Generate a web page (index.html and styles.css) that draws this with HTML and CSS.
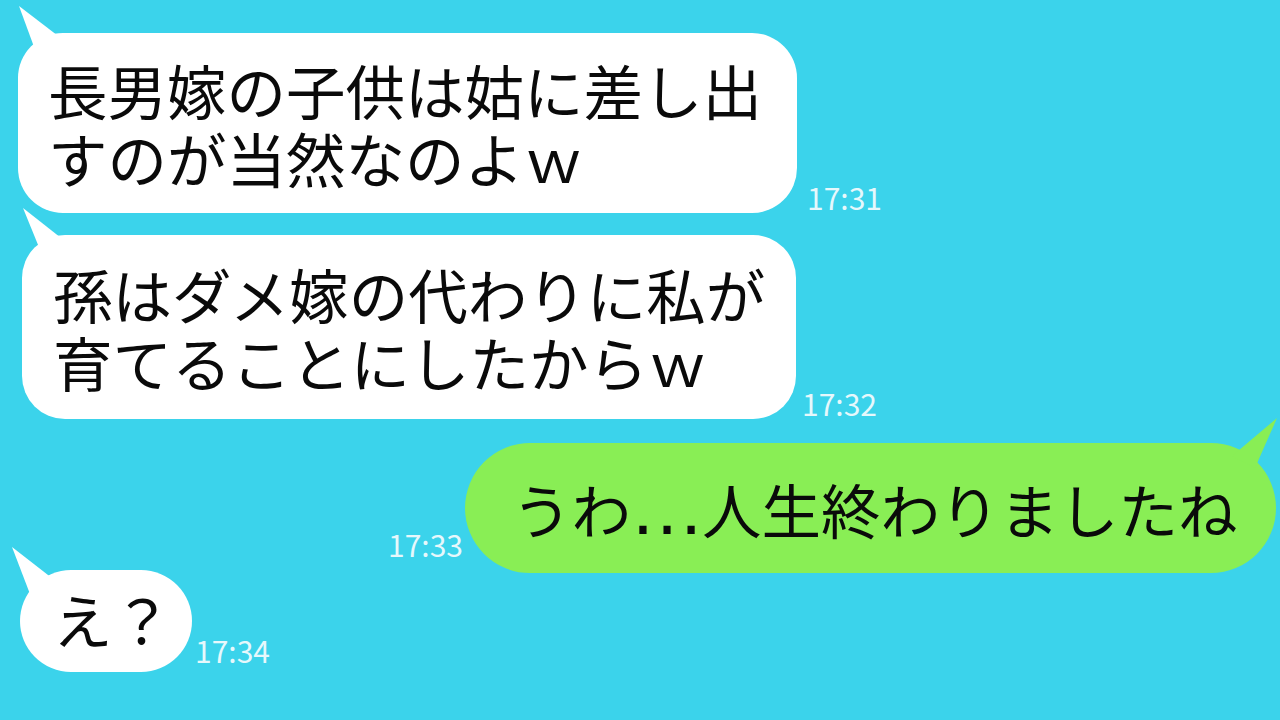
FILE: index.html
```html
<!DOCTYPE html>
<html lang="ja">
<head>
    <meta charset="UTF-8">
    <meta name="viewport" content="width=device-width, initial-scale=1.0">
    <title>トーク</title>
    <link rel="stylesheet" href="styles.css">
</head>
<body>
    <div class="chat">
        <div class="row row-1">
            <div class="bubble left b1">長男嫁の子供は姑に差し出<br>すのが当然なのよｗ</div>
            <span class="time t1">17:31</span>
        </div>

        <div class="row row-2">
            <div class="bubble left b2">孫はダメ嫁の代わりに私が<br>育てることにしたからｗ</div>
            <span class="time t2">17:32</span>
        </div>

        <div class="row row-3 mine">
            <span class="time t3">17:33</span>
            <div class="bubble right b3">うわ<span class="dots">…</span>人生終わりましたね</div>
        </div>

        <div class="row row-4">
            <div class="bubble left b4">え？</div>
            <span class="time t4">17:34</span>
        </div>
    </div>
</body>
</html>
```

FILE: styles.css
```css
body {
    margin: 0;
    background: #3bd3eb;
    font-family: "Noto Sans CJK JP", "Noto Sans", sans-serif;
    color: #0a0a0a;
}
.chat {
    width: 1280px;
    height: 720px;
    padding-top: 33px;
    box-sizing: border-box;
    overflow: hidden;
}
.row {
    display: flex;
    align-items: flex-end;
}
.row-1 { padding-left: 18px; }
.row-2 { padding-left: 22px; margin-top: 22px; }
.row-3 { padding-right: 4px; margin-top: 24px; justify-content: flex-end; }
.row-4 { padding-left: 20px; margin-top: -3px; }

.bubble {
    position: relative;
    font-size: 59.5px;
    line-height: 68px;
    white-space: nowrap;
    box-sizing: border-box;
}
.bubble.left {
    background: #fff;
}
.bubble.right {
    background: #89ee55;
}
.bubble::before {
    content: "";
    position: absolute;
    width: 50px;
    height: 52px;
    background: inherit;
}
.dots {
    font-family: "Liberation Sans", sans-serif;
    font-size: 76px;
    line-height: 0;
    margin: 0 -3px 0 -2px;
}

.b1 {
    width: 779px;
    padding: 22px 0 22px 30px;
    border-radius: 45px;
}
.b1::before {
    left: 0;
    top: -28px;
    clip-path: polygon(1px 1px, 19px 50px, 48px 37px);
}
.b2 {
    width: 774px;
    padding: 24px 0 24px 31px;
    border-radius: 43px;
}
.b2::before {
    left: 0;
    top: -28px;
    clip-path: polygon(1px 1px, 21px 50px, 48px 38px);
}
.b3 {
    width: 811px;
    padding: 31px 0 31px 47px;
    border-radius: 65px;
}
.b3::before {
    right: -2px;
    top: -26px;
    clip-path: polygon(49px 1px, 4px 39px, 27px 51px);
}
.b4 {
    padding: 14px 20px 20px 33px;
    border-radius: 51px;
}
.b4::before {
    left: -9px;
    top: -24px;
    clip-path: polygon(1px 1px, 19px 48px, 46px 36px);
}

.time {
    font-size: 30px;
    line-height: 1;
    color: #e6f8fc;
}
.t1 { margin-left: 10px; margin-bottom: 1px; }
.t2 { margin-left: 6px; margin-bottom: 1px; }
.t3 { margin-right: 2px; margin-bottom: 14px; }
.t4 { margin-left: 3px; margin-bottom: 7px; }
```
